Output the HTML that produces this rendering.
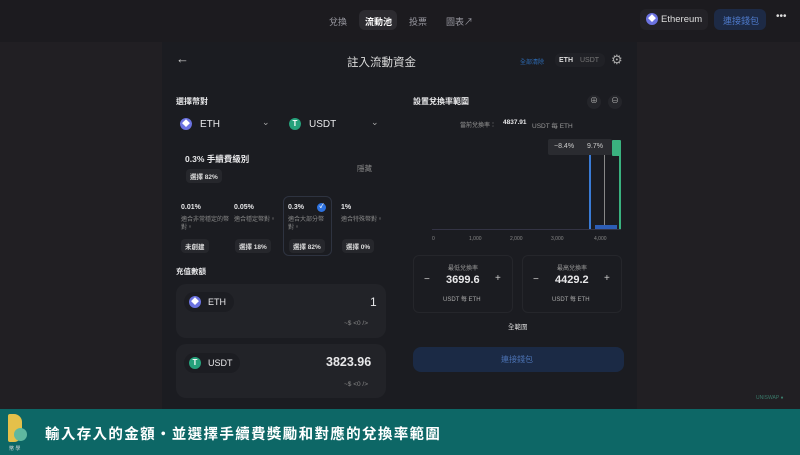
<!DOCTYPE html>
<html><head><meta charset="utf-8"><style>
*{margin:0;padding:0;box-sizing:border-box}
body{width:800px;height:455px;overflow:hidden;background:#211f23;font-family:"Liberation Sans","Noto Sans CJK TC",sans-serif;color:#e8e8ea;position:relative}
.a{position:absolute}
.top{left:0;top:0;width:800px;height:42px;background:#1c1b1f}
.nav{font-size:9px;color:#9a9aa2}
.modal{left:162px;top:42px;width:475px;height:368px;background:#1b1c21}
.pill{border-radius:6px}
.cb{font-size:7px;color:#c8c8cc}
.tag{background:#26272c;border-radius:4px;font-size:6.5px;font-weight:bold;color:#ddd;padding:2px 4px}
.box{background:#222328;border-radius:10px}
.coin{border-radius:50%;width:12px;height:12px;display:inline-block;color:#fff;font-size:8px;text-align:center;line-height:12px;font-weight:bold}
</style></head><body>
<div class="a top"></div>
<div class="a nav" style="left:329px;top:15px">兌換</div>
<div class="a pill" style="left:359px;top:10px;width:38px;height:20px;background:#2c2b30"></div>
<div class="a nav" style="left:365px;top:15px;color:#fff;font-weight:bold">流動池</div>
<div class="a nav" style="left:409px;top:15px">投票</div>
<div class="a nav" style="left:446px;top:15px">圖表↗</div>
<div class="a pill" style="left:640px;top:9px;width:68px;height:21px;background:#232227"></div>
<span class="a coin" style="left:646px;top:13px;background:#6b72e0">◆</span>
<div class="a" style="left:661px;top:14px;font-size:9.5px;color:#ddd">Ethereum</div>
<div class="a pill" style="left:714px;top:9px;width:52px;height:21px;background:#1d2a45"></div>
<div class="a" style="left:723px;top:14px;font-size:9px;color:#4d78c8">連接錢包</div>
<div class="a" style="left:776px;top:11px;font-size:10px;color:#ddd">•••</div>

<div class="a modal"></div>
<div class="a" style="left:176px;top:51px;font-size:13px;color:#ccc">←</div>
<div class="a" style="left:347px;top:54px;font-size:11.5px;color:#ddd">註入流動資金</div>
<div class="a" style="left:520px;top:57px;font-size:6px;color:#2d6db8">全部清除</div>
<div class="a pill" style="left:555px;top:53px;width:50px;height:14px;background:#202126"></div>
<div class="a" style="left:559px;top:57px;font-size:7px;color:#ddd;font-weight:bold">ETH</div>
<div class="a" style="left:580px;top:57px;font-size:7px;color:#777">USDT</div>
<div class="a" style="left:611px;top:52px;font-size:13px;color:#aaa">⚙</div>

<div class="a" style="left:176px;top:96px;font-size:8px;font-weight:bold">選擇幣對</div>
<span class="a coin" style="left:180px;top:118px;background:#6b72e0">◆</span>
<div class="a" style="left:200px;top:119px;font-size:10px">ETH</div>
<div class="a" style="left:262px;top:117px;font-size:9px;color:#aaa">⌄</div>
<span class="a coin" style="left:289px;top:118px;background:#26a17b">T</span>
<div class="a" style="left:309px;top:119px;font-size:10px">USDT</div>
<div class="a" style="left:371px;top:117px;font-size:9px;color:#aaa">⌄</div>

<div class="a" style="left:185px;top:153px;font-size:8.5px;font-weight:bold">0.3% 手續費級別</div>
<div class="a tag" style="left:186px;top:169px">選擇 82%</div>
<div class="a" style="left:357px;top:163px;font-size:7.5px;color:#888">隱藏</div>

<div class="a" style="left:283px;top:196px;width:49px;height:60px;border:1px solid #2e3340;border-radius:6px"></div>
<div class="a" style="left:181px;top:204px;font-size:7px;font-weight:bold">0.01%</div>
<div class="a cb" style="left:181px;top:216px;width:48px;color:#888;font-size:6px;line-height:8px">適合非常穩定的幣對。</div>
<div class="a tag" style="left:181px;top:239px">未創建</div>
<div class="a" style="left:234px;top:204px;font-size:7px;font-weight:bold">0.05%</div>
<div class="a cb" style="left:234px;top:216px;width:44px;color:#888;font-size:6px;line-height:8px">適合穩定幣對。</div>
<div class="a tag" style="left:235px;top:239px">選擇 18%</div>
<div class="a" style="left:288px;top:204px;font-size:7px;font-weight:bold">0.3%</div>
<span class="a coin" style="left:317px;top:203px;width:9px;height:9px;line-height:9px;font-size:6px;background:#2d72e0">✓</span>
<div class="a cb" style="left:288px;top:216px;width:42px;color:#888;font-size:6px;line-height:8px">適合大部分幣對。</div>
<div class="a tag" style="left:289px;top:239px">選擇 82%</div>
<div class="a" style="left:341px;top:204px;font-size:7px;font-weight:bold">1%</div>
<div class="a cb" style="left:341px;top:216px;width:44px;color:#888;font-size:6px;line-height:8px">適合特殊幣對。</div>
<div class="a tag" style="left:342px;top:239px">選擇 0%</div>

<div class="a" style="left:176px;top:266px;font-size:7.5px;font-weight:bold">充值數額</div>
<div class="a box" style="left:176px;top:284px;width:210px;height:54px"></div>
<div class="a pill" style="left:184px;top:292px;width:50px;height:20px;background:#1c1d22;border-radius:10px"></div>
<span class="a coin" style="left:189px;top:296px;background:#6b72e0">◆</span>
<div class="a" style="left:208px;top:297px;font-size:9px">ETH</div>
<div class="a" style="left:370px;top:295px;font-size:12px">1</div>
<div class="a" style="left:344px;top:320px;font-size:6.5px;color:#888">~$ &lt;0 /&gt;</div>
<div class="a box" style="left:176px;top:344px;width:210px;height:54px"></div>
<div class="a pill" style="left:184px;top:353px;width:56px;height:20px;background:#1c1d22;border-radius:10px"></div>
<span class="a coin" style="left:189px;top:357px;background:#26a17b">T</span>
<div class="a" style="left:208px;top:358px;font-size:9px">USDT</div>
<div class="a" style="left:326px;top:355px;font-size:12.5px;font-weight:bold">3823.96</div>
<div class="a" style="left:344px;top:381px;font-size:6.5px;color:#888">~$ &lt;0 /&gt;</div>

<div class="a" style="left:413px;top:96px;font-size:8px;font-weight:bold">設置兌換率範圍</div>
<div class="a" style="left:587px;top:95px;width:14px;height:14px;border-radius:50%;background:#24252a;font-size:8px;color:#aaa;text-align:center">⊕</div>
<div class="a" style="left:608px;top:95px;width:14px;height:14px;border-radius:50%;background:#24252a;font-size:8px;color:#aaa;text-align:center">⊖</div>
<div class="a" style="left:460px;top:120px;font-size:6px;color:#999">當前兌換率：</div>
<div class="a" style="left:503px;top:119px;font-size:6.5px;font-weight:bold">4837.91</div>
<div class="a" style="left:532px;top:120px;font-size:6.5px;color:#999">USDT 每 ETH</div>
<div class="a" style="left:548px;top:139px;width:64px;height:16px;background:#2a2b30;border-radius:2px"></div>
<div class="a" style="left:554px;top:143px;font-size:7px;color:#ccc">−8.4%</div>
<div class="a" style="left:587px;top:143px;font-size:7px;color:#ccc">9.7%</div>
<div class="a" style="left:589px;top:155px;width:2px;height:75px;background:#3a7bd5"></div>
<div class="a" style="left:604px;top:155px;width:1px;height:75px;background:#888"></div>
<div class="a" style="left:612px;top:140px;width:9px;height:16px;background:#3ab27f;border-radius:1px"></div>
<div class="a" style="left:619px;top:155px;width:2px;height:75px;background:#3ab27f"></div>
<div class="a" style="left:595px;top:225px;width:22px;height:5px;background:#2d5db5"></div>
<div class="a" style="left:432px;top:229px;width:189px;height:1px;background:#334"></div>
<div class="a" style="left:432px;top:236px;width:200px;font-size:5px;color:#888;word-spacing:0">
<span style="position:absolute;left:0">0</span><span style="position:absolute;left:37px">1,000</span><span style="position:absolute;left:78px">2,000</span><span style="position:absolute;left:119px">3,000</span><span style="position:absolute;left:162px">4,000</span></div>

<div class="a" style="left:413px;top:255px;width:100px;height:58px;border:1px solid #25262b;border-radius:6px"></div>
<div class="a" style="left:522px;top:255px;width:100px;height:58px;border:1px solid #25262b;border-radius:6px"></div>
<div class="a" style="left:448px;top:263px;font-size:6px;color:#999">最低兌換率</div>
<div class="a" style="left:424px;top:274px;font-size:10px;color:#ccc">−</div>
<div class="a" style="left:446px;top:274px;font-size:11px;font-weight:bold">3699.6</div>
<div class="a" style="left:495px;top:273px;font-size:10px;color:#ccc">+</div>
<div class="a" style="left:443px;top:294px;font-size:6px;color:#aaa">USDT 每 ETH</div>
<div class="a" style="left:557px;top:263px;font-size:6px;color:#999">最高兌換率</div>
<div class="a" style="left:533px;top:274px;font-size:10px;color:#ccc">−</div>
<div class="a" style="left:555px;top:274px;font-size:11px;font-weight:bold">4429.2</div>
<div class="a" style="left:604px;top:273px;font-size:10px;color:#ccc">+</div>
<div class="a" style="left:552px;top:294px;font-size:6px;color:#aaa">USDT 每 ETH</div>
<div class="a" style="left:508px;top:321px;font-size:6.5px;color:#ddd">全範圍</div>
<div class="a" style="left:413px;top:347px;width:211px;height:25px;background:#1b2a45;border-radius:8px"></div>
<div class="a" style="left:501px;top:354px;font-size:8px;color:#4b72b3">連接錢包</div>
<div class="a" style="left:756px;top:395px;font-size:5px;color:#3a7a6a">UNISWAP ●</div>

<div class="a" style="left:0;top:409px;width:800px;height:46px;background:#0d6766"></div>
<div class="a" style="left:8px;top:414px;width:14px;height:28px;background:#e4c04a;border-radius:2px 8px 8px 2px"></div>
<div class="a" style="left:14px;top:428px;width:13px;height:13px;background:#5fb89f;border-radius:50%"></div>
<div class="a" style="left:9px;top:445px;font-size:5px;color:#ddd">幣 學</div>
<div class="a" style="left:45px;top:423px;font-size:14.5px;color:#fff;font-weight:bold;letter-spacing:1.35px">輸入存入的金額・並選擇手續費獎勵和對應的兌換率範圍</div>
</body></html>
